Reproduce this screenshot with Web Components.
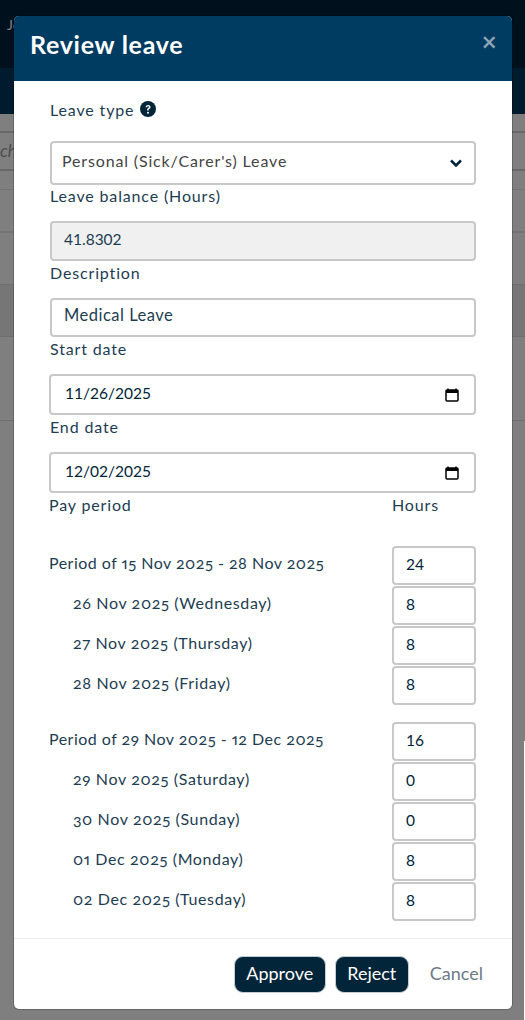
<!DOCTYPE html>
<html><head><meta charset="utf-8"><style>
html,body{margin:0;padding:0;height:1020px;overflow:hidden;background:#808080}
body{font-family:Lato,"Noto Sans",sans-serif;color:#022539}
</style></head><body>
<page-backdrop>
<review-modal>
<span slot="title">Review leave</span>
<form-field label="Leave type" help><select-box>Personal (Sick/Carer's) Leave</select-box></form-field>
<form-field label="Leave balance (Hours)"><text-box disabled>41.8302</text-box></form-field>
<form-field label="Description"><text-box big>Medical Leave</text-box></form-field>
<form-field label="Start date"><date-box>11/26/2025</date-box></form-field>
<form-field label="End date"><date-box>12/02/2025</date-box></form-field>
<pay-head></pay-head>
<pay-group>
<pay-row label="Period of 15 Nov 2025 - 28 Nov 2025" value="24"></pay-row>
<pay-row sub label="26 Nov 2025 (Wednesday)" value="8"></pay-row>
<pay-row sub label="27 Nov 2025 (Thursday)" value="8"></pay-row>
<pay-row sub label="28 Nov 2025 (Friday)" value="8"></pay-row>
</pay-group>
<pay-group>
<pay-row label="Period of 29 Nov 2025 - 12 Dec 2025" value="16"></pay-row>
<pay-row sub label="29 Nov 2025 (Saturday)" value="0"></pay-row>
<pay-row sub label="30 Nov 2025 (Sunday)" value="0"></pay-row>
<pay-row sub label="01 Dec 2025 (Monday)" value="8"></pay-row>
<pay-row sub label="02 Dec 2025 (Tuesday)" value="8"></pay-row>
</pay-group>
</review-modal>
</page-backdrop>
<script>
function def(name,css,html){
  customElements.define(name,class extends HTMLElement{
    connectedCallback(){
      if(this.shadowRoot)return;
      const r=this.attachShadow({mode:'open'});
      r.innerHTML='<style>'+css+'</style>'+(typeof html==='function'?html(this):html);
    }
  });
}
const LS='font-size:16px;letter-spacing:.85px;';
def('page-backdrop',`:host{display:block;height:1020px;position:relative;overflow:hidden;background:#7f7f7f}
.top{height:68px;background:#00101d;color:#7d8388;font-size:14px;padding:16px 7px;box-sizing:border-box}
.sub{height:46px;background:#001b2d}
.line{box-sizing:border-box}
.ch{font-style:italic;color:#4d4d4d;font-size:17px;line-height:36px}
.edge{position:absolute;right:0;top:741px;bottom:0;width:1px;background:#fff}
`,`<div class="top">Jo</div><div class="sub"></div>
<div class="line" style="height:19px;border-bottom:2px solid #686868"></div>
<div class="line ch" style="height:38px;border-bottom:2px solid #686868">ch</div>
<div class="line" style="height:19px;border-bottom:1px solid #737373"></div>
<div class="line" style="height:43px;border-bottom:2px solid #737373"></div>
<div class="line" style="height:52px;border-bottom:1px solid #6e6e6e"></div>
<div class="line" style="height:52px;border-bottom:1px solid #6e6e6e;background:#767676"></div>
<div class="line" style="height:84px;border-bottom:1px solid #6e6e6e"></div>
<div class="edge"></div>
<slot></slot>`);
def('review-modal',`:host{position:absolute;left:14px;top:16px;width:498px;height:993px;background:#fff;border-radius:5px;overflow:hidden;box-shadow:0 0 0 1px rgba(0,0,0,.2);display:flex;flex-direction:column}
header{height:65px;flex:none;background:#003b61;color:#fff;display:flex;align-items:center;justify-content:space-between;padding:0 15px 0 16px;box-sizing:border-box}
h1{margin:0 0 9px;font-size:25px;font-weight:700;letter-spacing:.72px;line-height:1}
.x{color:#8da5b6;font-size:27px;font-weight:500;line-height:1;margin-top:-14px;font-family:"Noto Sans"}
main{flex:1;padding:17px 36px 0;display:flex;flex-direction:column;min-height:0}
footer{flex:none;height:71px;border-top:1px solid #e9ecef;box-sizing:border-box;display:flex;justify-content:flex-end;align-items:center;gap:9px;padding:0 29px 0 0;font-size:18px}
button{font:inherit;height:37px;border-radius:9px;background:#022539;color:#fff;border:1px solid #c5cbd0;padding:0 0 3px;box-sizing:border-box}
.a{width:92px}.r{width:74px}
.c{color:#6c7a86;margin-left:12px;padding-bottom:3px}
`,`<header><h1><slot name="title"></slot></h1><span class="x">×</span></header><main><slot></slot></main>
<footer><button class="a">Approve</button><button class="r">Reject</button><span class="c">Cancel</span></footer>`);
def('form-field',`:host{display:block}
label{display:flex;gap:6px;${LS}line-height:24px;height:36.7px;align-items:flex-start;color:#1d3d52}
label.h{height:43px}
svg{width:16px;height:16px;margin-top:3px}
`,h=>`<label class="${h.hasAttribute('help')?'h':''}">${h.getAttribute('label')}${h.hasAttribute('help')?'<svg viewBox="0 0 16 16"><circle cx="8" cy="8" r="8" fill="#022539"/><path d="M5.6 6.2C5.7 4.8 6.7 4 8.1 4c1.4 0 2.4.8 2.4 2 0 .9-.5 1.4-1.2 1.9-.6.4-.8.7-.8 1.3v.3H7.1V9c0-.9.3-1.4 1-1.9.6-.4.9-.7.9-1.1 0-.5-.4-.8-.9-.8-.6 0-1 .4-1 1z" fill="#fff"/><circle cx="8" cy="11.7" r="1" fill="#fff"/></svg>':''}</label><slot></slot>`);
const box=`display:flex;align-items:center;box-sizing:border-box;border:2px solid #c8c8c8;border-radius:4px;background:#fff;`;
def('select-box',`:host{${box}height:44px;margin-bottom:-.7px;padding:0 11px 6px 10px;${LS}color:#444;justify-content:space-between}
svg{width:14px;height:10px;margin:6px 0 0}`,`<span><slot></slot></span><svg viewBox="0 0 14 10"><path d="M2 2.5l5 5 5-5" fill="none" stroke="#022539" stroke-width="2.6"/></svg>`);
def('text-box',`:host{${box}height:40px;padding:0 12px 4px 12px;font-size:15.5px;color:#1d3d52}
:host([disabled]){background:#f0f0f0}
:host([big]){font-size:16.5px;letter-spacing:.5px;height:39.6px}`,`<slot></slot>`);
def('date-box',`:host{${box}height:41.3px;padding:0 15px 3px 14px;font-size:15.5px;justify-content:space-between;color:#022539;margin-left:-1px}
svg{width:14px;height:14px;margin-top:3px}`,`<span><slot></slot></span><svg viewBox="0 0 14 14"><path d="M3 .5v2M11 .5v2" stroke="#000" stroke-width="1.4"/><rect x="1" y="2" width="12" height="11" rx="1" fill="none" stroke="#000" stroke-width="1.5"/><rect x="1" y="2" width="12" height="3" fill="#000"/></svg>`);
def('pay-head',`:host{display:flex;justify-content:space-between;${LS}color:#1d3d52;height:52.7px;line-height:24px;margin-left:-1px}
span:last-child{width:84px}`,`<span>Pay period</span><span>Hours</span>`);
def('pay-group',`:host{display:flex;flex-direction:column;margin-bottom:16px}`,`<slot></slot>`);
def('pay-row',`:host{display:flex;justify-content:space-between;height:40px;font-size:16px;letter-spacing:.48px;color:#1d3d52;margin-left:-1px}
:host([sub]){letter-spacing:.62px}
:host([sub]) .l{padding-left:24px}
.l{padding-top:6px;line-height:22px;font-variant-numeric:oldstyle-nums proportional-nums}
.v{width:84px;height:39px;box-sizing:border-box;${box}padding:0 12px 2px 12px;color:#022539;font-size:15.5px;letter-spacing:0}`,h=>`<span class="l">${h.getAttribute('label')}</span><span class="v">${h.getAttribute('value')}</span>`);
</script>
</body></html>
